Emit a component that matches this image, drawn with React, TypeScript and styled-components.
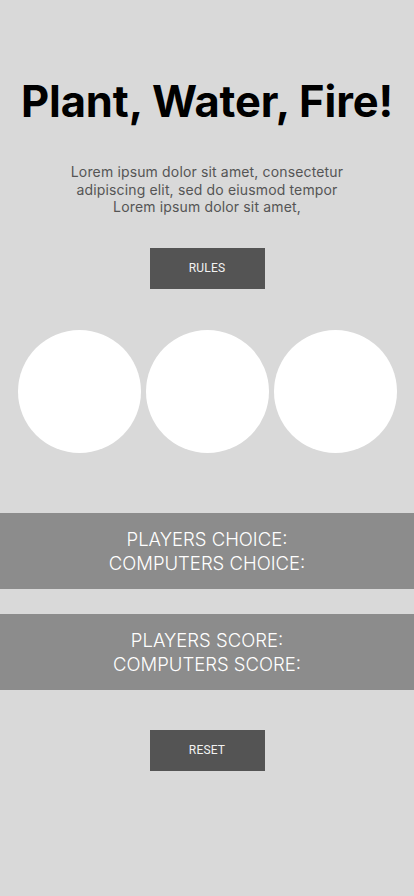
import * as React from 'react';
import styled, { createGlobalStyle } from 'styled-components';

const GlobalCss = createGlobalStyle`
  html, body {
    margin: 0;
    padding: 0;
    background: #d9d9d9;
  }
  body {
    font-family: Inter, "Noto Sans", sans-serif;
  }
`;

const Page = styled.main`
  width: 414px;
  min-height: 896px;
  background: #d9d9d9;
  display: flex;
  flex-direction: column;
  align-items: center;
  padding-top: 73px;
  box-sizing: border-box;
`;

const Title = styled.h1`
  margin: 0;
  font-family: Inter, sans-serif;
  font-weight: 700;
  font-size: 43.5px;
  line-height: 56px;
  color: #000;
  letter-spacing: -0.1px;
`;

const Intro = styled.p`
  margin: 34px 0 0;
  width: 290px;
  text-align: center;
  font-family: Inter, sans-serif;
  font-size: 14px;
  line-height: 17.5px;
  letter-spacing: 0.15px;
  color: #555;
`;

const Button = styled.button`
  width: 115px;
  height: 41px;
  border: none;
  background: #545454;
  color: #f2f2f2;
  font-family: Roboto, sans-serif;
  font-size: 12px;
  letter-spacing: 0.2px;
  padding: 0;
  cursor: pointer;
`;

const RulesButton = styled(Button)`
  margin-top: 32px;
`;

const ResetButton = styled(Button)`
  margin-top: 40px;
`;

const Choices = styled.div`
  display: flex;
  gap: 5px;
  margin-top: 41px;
`;

const Choice = styled.button`
  width: 123px;
  height: 123px;
  border-radius: 50%;
  border: none;
  background: #fff;
  padding: 0;
  cursor: pointer;
`;

const Band = styled.section<{ $gap: number }>`
  width: 100%;
  height: 76px;
  margin-top: ${p => p.$gap}px;
  background: #8c8c8c;
  display: flex;
  flex-direction: column;
  align-items: center;
  justify-content: center;
  color: #fff;
  font-family: Inter, sans-serif;
  font-weight: 300;
  font-size: 18.5px;
  line-height: 24px;
  text-align: center;
`;

export default function App() {
  return (
    <Page>
      <GlobalCss />
      <Title>Plant, Water, Fire!</Title>
      <Intro>
        Lorem ipsum dolor sit amet, consectetur adipiscing elit, sed do eiusmod tempor Lorem
        ipsum dolor sit amet,
      </Intro>
      <RulesButton>RULES</RulesButton>
      <Choices>
        <Choice aria-label="Plant" />
        <Choice aria-label="Water" />
        <Choice aria-label="Fire" />
      </Choices>
      <Band $gap={60}>
        <div>PLAYERS CHOICE:</div>
        <div>COMPUTERS CHOICE:</div>
      </Band>
      <Band $gap={25}>
        <div>PLAYERS SCORE:</div>
        <div>COMPUTERS SCORE:</div>
      </Band>
      <ResetButton>RESET</ResetButton>
    </Page>
  );
}
